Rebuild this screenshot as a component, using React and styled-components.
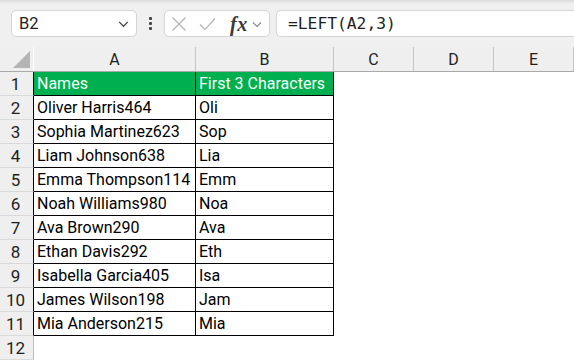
import React from 'react';
import styled, { createGlobalStyle } from 'styled-components';

const Global = createGlobalStyle`
  html, body { margin: 0; padding: 0; background: #ffffff; }
  body { font-family: Roboto, "Liberation Sans", sans-serif; overflow: hidden; }
`;

const rows = [
  ['Oliver Harris464', 'Oli'],
  ['Sophia Martinez623', 'Sop'],
  ['Liam Johnson638', 'Lia'],
  ['Emma Thompson114', 'Emm'],
  ['Noah Williams980', 'Noa'],
  ['Ava Brown290', 'Ava'],
  ['Ethan Davis292', 'Eth'],
  ['Isabella Garcia405', 'Isa'],
  ['James Wilson198', 'Jam'],
  ['Mia Anderson215', 'Mia'],
];

const cols = '34px 162px 138px 80px 80px 1fr';

const Page = styled.div`
  width: 574px;
  height: 360px;
  overflow: hidden;
  background: #fff;
`;

const Toolbar = styled.div`
  height: 47px;
  box-sizing: border-box;
  background: #f0f0f0;
  display: flex;
  align-items: flex-start;
  padding: 10px 0 0 11px;
  background-image: linear-gradient(#d9d9d9, #ececec 3px, #f0f0f0 4px);
`;

const Field = styled.div`
  height: 27px;
  box-sizing: border-box;
  background: #fff;
  border: 1px solid #d4d4d4;
  border-radius: 5px;
  display: flex;
  align-items: center;
`;

const NameBox = styled(Field)`
  width: 126px;
  padding: 0 6px 0 7px;
  justify-content: space-between;
  font-size: 16.5px;
  color: #1e1e1e;
`;

const Dots = styled.div`
  width: 27px;
  height: 27px;
  display: flex;
  flex-direction: column;
  align-items: center;
  justify-content: center;
  gap: 2px;
  span {
    width: 3px;
    height: 3px;
    background: #444;
    border-radius: 1px;
  }
`;

const FuncBox = styled(Field)`
  width: 106px;
  padding: 0 0 0 6px;
`;

const Fx = styled.span`
  font-family: "Liberation Serif", "DejaVu Serif", serif;
  font-style: italic;
  font-weight: bold;
  font-size: 20px;
  color: #3a3a3a;
  margin: 0 3px 0 14px;
  line-height: 1;
  letter-spacing: 0.5px;
`;

const FormulaBox = styled(Field)`
  flex: 1;
  margin-left: 6px;
  border-right: none;
  border-radius: 5px 0 0 5px;
  padding-left: 11px;
  font-family: "DejaVu Sans Mono", "Liberation Mono", monospace;
  font-size: 16.3px;
  color: #1e1e1e;
`;

const Row = styled.div`
  display: grid;
  grid-template-columns: ${cols};
  height: 24px;
`;

const HeadRow = styled(Row)`
  background: #efefef;
  border-bottom: 1px solid #a9a9a9;
`;

const Corner = styled.div`
  border-right: 1px solid #fff;
  position: relative;
  svg { position: absolute; right: 3px; bottom: 3px; }
`;

const ColHead = styled.div`
  box-sizing: border-box;
  border-right: 1px solid #c4c4c4;
  display: flex;
  align-items: center;
  justify-content: center;
  font-size: 16px;
  color: #1e1e1e;
  padding-top: 1px;
`;

const RowHead = styled.div`
  box-sizing: border-box;
  background: #efefef;
  border-right: 1px solid ${p => (p.$boxed ? '#000' : '#bdbdbd')};
  border-bottom: 1px solid #d9d9d9;
  display: flex;
  align-items: flex-end;
  justify-content: center;
  padding-bottom: 1px;
  padding-right: 2px;
  font-size: 17px;
  color: #1e1e1e;
`;

const Cell = styled.div`
  box-sizing: border-box;
  border-right: 1px solid #000;
  border-bottom: 1px solid #000;
  background: ${p => (p.$head ? '#00b050' : '#fff')};
  color: ${p => (p.$head ? '#f4fff6' : '#000')};
  display: flex;
  align-items: flex-end;
  padding: 0 0 2px 3px;
  font-size: 16px;
  white-space: nowrap;
  overflow: hidden;
`;

const Empty = styled.div``;

const Chevron = ({ size = 12, color = '#444' }) => (
  <svg width={size} height={size} viewBox="0 0 12 12">
    <path d="M2 4.5 L6 8.5 L10 4.5" fill="none" stroke={color} strokeWidth="1.2" />
  </svg>
);

const App = () => (
  <Page>
    <Global />
    <Toolbar>
      <NameBox>
        <span>B2</span>
        <Chevron size={13} />
      </NameBox>
      <Dots><span /><span /><span /></Dots>
      <FuncBox>
        <svg width="16" height="16" viewBox="0 0 16 16">
          <path d="M1.5 1.5 L14.5 14.5 M14.5 1.5 L1.5 14.5" stroke="#b3b3b3" strokeWidth="1.2" fill="none" />
        </svg>
        <svg width="17" height="16" viewBox="0 0 17 16" style={{ marginLeft: 12 }}>
          <path d="M1 8.5 L6 13.5 L16 2.5" stroke="#b3b3b3" strokeWidth="1.2" fill="none" />
        </svg>
        <Fx>fx</Fx>
        <Chevron size={12} color="#888" />
      </FuncBox>
      <FormulaBox>=LEFT(A2,3)</FormulaBox>
    </Toolbar>

    <HeadRow>
      <Corner>
        <svg width="17" height="17" viewBox="0 0 17 17">
          <path d="M17 0 L17 17 L0 17 Z" fill="#b4b4b4" />
        </svg>
      </Corner>
      {['A', 'B', 'C', 'D', 'E'].map(c => (
        <ColHead key={c}>{c}</ColHead>
      ))}
    </HeadRow>

    <Row>
      <RowHead $boxed>1</RowHead>
      <Cell $head>Names</Cell>
      <Cell $head>First 3 Characters</Cell>
      <Empty /><Empty /><Empty />
    </Row>
    {rows.map(([name, first], i) => (
      <Row key={name}>
        <RowHead $boxed>{i + 2}</RowHead>
        <Cell>{name}</Cell>
        <Cell>{first}</Cell>
        <Empty /><Empty /><Empty />
      </Row>
    ))}
    <Row>
      <RowHead>12</RowHead>
      <Empty /><Empty /><Empty /><Empty /><Empty />
    </Row>
    <Row>
      <RowHead />
      <Empty /><Empty /><Empty /><Empty /><Empty />
    </Row>
  </Page>
);

export default App;
